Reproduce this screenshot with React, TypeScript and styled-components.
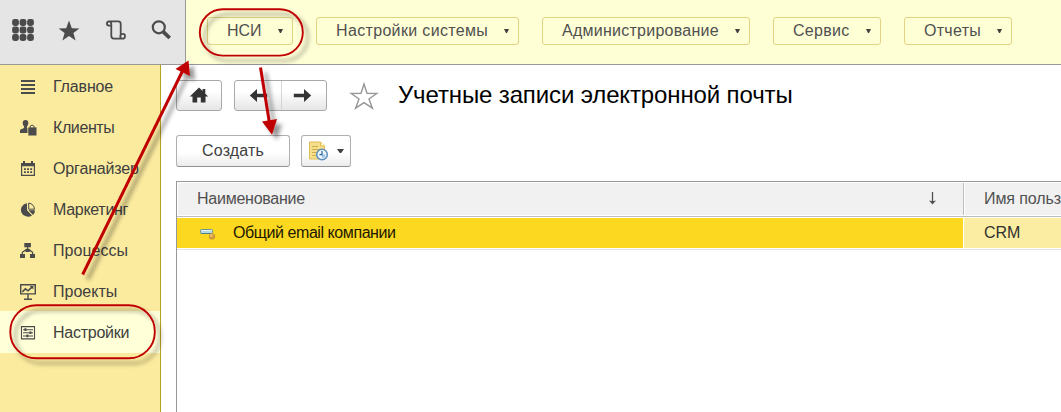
import React from "react";
import styled, { createGlobalStyle } from "styled-components";

const Global = createGlobalStyle`
  * { box-sizing: border-box; }
  html, body { margin: 0; padding: 0; }
  body {
    background: #fff;
    overflow: hidden;
    font-family: "Liberation Sans", Arial, sans-serif;
    font-size: 16px;
    color: #404040;
  }
  button { font: inherit; color: inherit; padding: 0; margin: 0; }
  svg { display: block; flex: none; }
`;

const Page = styled.div`
  position: relative;
  width: 1061px;
  height: 412px;
  overflow: hidden;
  display: flex;
  flex-direction: column;
`;

const TopBar = styled.header`
  display: flex;
  height: 65px;
  flex: none;
  border-bottom: 1px solid #989898;
  background: #ffffd6;
`;

const QuickTools = styled.div`
  width: 186px;
  flex: none;
  display: flex;
  background: #e5e5e5;
  border-right: 1px solid #989898;
`;

const Sections = styled.nav`
  display: flex;
  gap: 23px;
  padding: 17px 0 0 21px;
`;

const SectionButton = styled.button<{ $w: number }>`
  width: ${(p) => p.$w}px;
  height: 28px;
  display: flex;
  align-items: center;
  justify-content: space-between;
  padding: 0 9px 1px 19px;
  border: 1px solid #e2d382;
  border-radius: 3px;
  background: transparent;
  color: #505050;
`;

const Label = styled.span<{ $ls?: number }>`
  white-space: nowrap;
  letter-spacing: ${(p) => p.$ls ?? 0}px;
`;

const Body = styled.div`
  display: flex;
  flex: 1;
  min-height: 0;
`;

const Sidebar = styled.aside`
  width: 161px;
  flex: none;
  background: #fbeb9e;
  border-right: 1px solid #b9a21b;
`;

const SideItem = styled.div<{ $active?: boolean }>`
  height: 41px;
  display: flex;
  align-items: center;
  gap: 16px;
  padding-left: 19px;
  background: ${(p) => (p.$active ? "#ffffd8" : "transparent")};
  box-shadow: ${(p) => (p.$active ? "0 -1px #ffffd8" : "none")};
  &:first-child { margin-top: 1px; }
`;

const Content = styled.main`
  flex: 1;
  min-width: 0;
  padding: 15px 0 0 15px;
  display: flex;
  flex-direction: column;
`;

const TitleRow = styled.div`
  display: flex;
  height: 31px;
  align-items: center;
`;

const ToolButton = styled.button<{ $w: number }>`
  width: ${(p) => p.$w}px;
  height: 31px;
  display: flex;
  align-items: center;
  justify-content: center;
  border: 1px solid #a9a9a9;
  border-radius: 3px;
  background: linear-gradient(#fff 0%, #fff 35%, #e6e6e6 100%);
  color: #404040;
`;

const NavPair = styled(ToolButton).attrs({ as: "div" })`
  margin-left: 12px;
  align-items: stretch;
`;

const NavHalf = styled.span`
  flex: 1;
  display: flex;
  align-items: center;
  justify-content: center;
  & + & { border-left: 1px solid #d5d5d5; flex: 0 0 45px; padding-right: 3px; }
`;

const Title = styled.h1`
  margin: 0 0 2px 19px;
  font-size: 24px;
  font-weight: 400;
  line-height: 30px;
  letter-spacing: -0.13px;
  color: #000;
  white-space: nowrap;
`;

const StarSlot = styled.span`
  margin-left: 22px;
`;

const Commands = styled.div`
  display: flex;
  gap: 11px;
  margin-top: 24px;
`;

const CommandButton = styled(ToolButton)`
  height: 32px;
  border-color: #b0b0b0;
  border-bottom-color: #929292;
  background: linear-gradient(#fff 0%, #fff 55%, #ececec 100%);
  padding-bottom: 1px;
`;

const Table = styled.section`
  margin-top: 14px;
  flex: 1;
  border-top: 1px solid #989898;
  border-left: 1px solid #989898;
`;

const Cells = styled.div`
  display: grid;
  grid-template-columns: 786px 1fr;
`;

const HeaderCells = styled(Cells)`
  height: 35px;
  border-bottom: 1px solid #bdbdbd;
`;

const HeadCell = styled.div`
  display: flex;
  align-items: center;
  justify-content: space-between;
  margin: 1px 0 1px 1px;
  padding: 0 26px 1px 19px;
  background: #f1f1f1;
  color: #505050;
  overflow: hidden;
  & + & { margin-left: 0; border-left: 1px solid #bdbdbd; box-shadow: inset 1px 0 #fff; padding: 0 0 1px 20px; }
`;

const RowCells = styled(Cells)`
  height: 33px;
  padding: 1px 0;
  border-bottom: 1px solid #e2e2e2;
`;

const Cell = styled.div<{ $current?: boolean }>`
  display: flex;
  align-items: center;
  gap: 16px;
  padding-left: ${(p) => (p.$current ? 23 : 20)}px;
  background: ${(p) => (p.$current ? "#fcd920" : "#fbeea3")};
  color: ${(p) => (p.$current ? "#1c1800" : "#303030")};
  & + & { border-left: 1px solid #fff; }
`;

const Overlay = styled.svg`
  position: absolute;
  inset: 0;
  pointer-events: none;
`;

const DARK = "#4b4b4b";

const Caret = ({ w = 5 }: { w?: number }) => (
  <svg width={w} height="4" viewBox="0 0 5 4" preserveAspectRatio="none">
    <path d="M0 0H5L3 4H2Z" fill="#404040" />
  </svg>
);

const QuickIcons = () => (
  <svg width="185" height="64" viewBox="0 0 185 64">
    <g fill={DARK}>
      {[15.5, 23, 30.5].map((x) =>
        [22.5, 30, 37.5].map((y) => <rect key={`${x}-${y}`} x={x - 3.4} y={y - 3.4} width="6.8" height="6.8" rx="2.4" />)
      )}
      <path d="M69 20.4L71.8 28.2L79.4 28.4L73.4 33L75.6 40.6L69 36.1L62.4 40.6L64.6 33L58.6 28.4L66.2 28.2Z" />
    </g>
    <g fill="none" stroke={DARK}>
      <path d="M111.3 25.6H109Q106.9 25.6 106.9 23.6T109 21.4H118.5Q120.7 21.4 120.7 24V33.8M109 21.4Q111.3 21.5 111.3 24V35.8Q111.3 38.7 114 38.7H122.5Q125 38.7 125 36.2T122.8 33.8Q120.3 33.8 120.3 36.2T122.5 38.7" strokeWidth="1.8" />
      <circle cx="158.8" cy="27.3" r="6" strokeWidth="2.2" />
      <path d="M163.4 31.8L169.7 38" strokeWidth="3.8" />
    </g>
  </svg>
);

const SideIcon = ({ name }: { name: string }) => (
  <svg width="18" height="18" viewBox="0 0 18 18" fill={DARK}>
    {name === "list" && <path d="M2 2h14v1.9H2zM2 6h14v1.9H2zM2 10h14v1.9H2zM2 14h14v1.9H2z" />}
    {name === "clients" && (
      <>
        <path d="M6.5 1Q9.5 1 9.3 4.2Q9.2 6.5 8 7.6V9L10.3 10V14H1V11.3Q1.2 10.3 5.1 9V7.6Q3.8 6.5 3.7 4.2Q3.6 1 6.5 1Z" />
        <path d="M9.2 8.4h8.3v8.1H9.2z" />
        <path d="M11 9V8.3Q11.2 6.2 13.1 6.2T15.3 8.3V9" fill="none" stroke={DARK} />
        <path d="M8.8 7.7V16" stroke="#fbeb9e" strokeWidth=".8" />
      </>
    )}
    {name === "calendar" && (
      <>
        <path d="M2 3h14v13H2zM3.2 6.2v8.6h11.6V6.2z" fillRule="evenodd" />
        <path d="M4 1h2v3H4zM12 1h2v3h-2zM5 8.2h1.9v1.9H5zM8.1 8.2h1.9v1.9H8.1zM11.2 8.2h1.9v1.9h-1.9zM5 11.2h1.9v1.9H5zM8.1 11.2h1.9v1.9H8.1zM11.2 11.2h1.9v1.9h-1.9z" />
      </>
    )}
    {name === "pie" && (
      <>
        <path d="M8 2.3V9.2L13 14.4A7 6.7 0 1 1 8 2.3Z" />
        <path d="M9.7 2V8.2H15.5Q15 3 9.7 2Z" fill="none" stroke={DARK} />
        <path d="M9.5 9.3H16Q16 12 14 14Z" />
      </>
    )}
    {name === "process" && (
      <>
        <path d="M5.3 1h6.6v4.2H5.3zM1 12h5v4H1zM11 12h5v4h-5zM5.6 8.4L7 6.8h3.3l1.4 1.6-1.4 1.6H7z" />
        <path d="M8.6 5v3M3.3 12V10.3L6.5 8.2H10.7L13.6 10.3V12" fill="none" stroke={DARK} strokeWidth="1.2" />
      </>
    )}
    {name === "projects" && (
      <>
        <path d="M1.7 1.7h14.6v9.2H1.7zM9 11v4.8M5 16.2h8" fill="none" stroke={DARK} strokeWidth="1.4" />
        <path d="M3.3 8.8L6.4 5.9L9 7.8L13 4.2" fill="none" stroke={DARK} strokeWidth="1.6" />
        <path d="M10.8 3h3.6v3.6z" />
      </>
    )}
    {name === "settings" && (
      <>
        <path d="M2.5 2.6h13v12.3h-13z" fill="none" stroke={DARK} strokeWidth="1.1" />
        <path d="M4 5.2h10v1H4zM4 8.3h10v1H4zM4 11.5h10v1H4zM5.4 4.3h2V7h-2zM10.4 7.4h2v2.7h-2zM7.4 10.6h2v2.7h-2z" />
      </>
    )}
  </svg>
);

const HomeIcon = () => (
  <svg width="20" height="17" viewBox="0 0 20 17">
    <path d="M10 .4L13.6 4V2H16.3V6.7L19.2 9.6H16.5V15.4H11.8V10.4H8.2V15.4H3.5V9.6H.8Z" fill="#333" />
  </svg>
);

const Arrow = ({ flip }: { flip?: boolean }) => (
  <svg width="19" height="15" viewBox="0 0 19 15">
    <path d="M.8 7.5L8 1V5.7H18.2V9.3H8V14Z" fill="#333" transform={flip ? "translate(19 0) scale(-1 1)" : undefined} />
  </svg>
);

const Star = () => (
  <svg width="30" height="28" viewBox="0 0 30 28">
    <path d="M15 2L18 11.3L27.8 11.5L20 17L23.4 26.2L15 20.6L6.6 26.2L10 17L2.2 11.5L12 11.3Z" fill="#fff" stroke="#979797" strokeWidth="1.4" />
  </svg>
);

const NoteClock = () => (
  <svg width="21" height="20" viewBox="0 0 21 20">
    <path d="M1.5 1H12.5L16.5 5V18H1.5Z" fill="#f6df8b" stroke="#dfbd55" />
    <path d="M12.5 1V5H16.5" fill="#fff5c2" stroke="#dfbd55" />
    <path d="M4 5.5h6M4 8.5h9M4 11.5h5M4 14.5h4" stroke="#cfae50" />
    <circle cx="14" cy="13.5" r="5.3" fill="#eaf5fc" stroke="#5d8fbd" strokeWidth="1.5" />
    <path d="M14 9.8V13.5H17.5A3.7 3.7 0 0 1 14 17.2Z" fill="#9fc6e4" />
    <path d="M14 10V13.7H11.5" fill="none" stroke="#2d6396" strokeWidth="1.2" />
  </svg>
);

const RecordIcon = () => (
  <svg width="17" height="14" viewBox="0 0 17 14">
    <rect x=".5" y="3.5" width="12" height="4" rx="1" fill="#b7d8df" stroke="#6f9793" />
    <path d="M1.5 4.5h10" stroke="#e4f4f5" />
    <path d="M1 7.5h11" stroke="#4f7f8c" />
    <circle cx="12" cy="10.4" r="3.2" fill="#cf9a35" />
    <circle cx="11.3" cy="9.6" r="1.3" fill="#eccb75" />
  </svg>
);

const SortArrow = () => (
  <svg width="9" height="13" viewBox="0 0 9 13">
    <path d="M4.5 0V10" stroke="#505050" strokeWidth="1.3" />
    <path d="M1 8.5L4.5 9.3L8 8.5L4.5 12.5Z" fill="#505050" />
  </svg>
);

const sections = [
  { text: "НСИ", w: 86, ls: 0 },
  { text: "Настройки системы", w: 203, ls: 0.34 },
  { text: "Администрирование", w: 208, ls: 0.25 },
  { text: "Сервис", w: 108, ls: 0.3 },
  { text: "Отчеты", w: 108, ls: 0.3 },
];

const sideItems = [
  { text: "Главное", icon: "list", ls: -0.15 },
  { text: "Клиенты", icon: "clients", ls: -0.4 },
  { text: "Органайзер", icon: "calendar", ls: -0.15 },
  { text: "Маркетинг", icon: "pie", ls: -0.3 },
  { text: "Процессы", icon: "process", ls: 0.05 },
  { text: "Проекты", icon: "projects", ls: 0 },
  { text: "Настройки", icon: "settings", ls: -0.25, active: true },
];

const Annotations = () => (
  <Overlay width="1061" height="412" viewBox="0 0 1061 412">
    <defs>
      <filter id="shadow" x="-20%" y="-20%" width="150%" height="150%">
        <feDropShadow dx="5" dy="5" stdDeviation="2" floodColor="#000" floodOpacity=".42" />
      </filter>
    </defs>
    <g stroke="#c00000" fill="none" filter="url(#shadow)">
      <rect x="199.8" y="9.3" width="103" height="46.3" rx="23" strokeWidth="1.9" />
      <rect x="10.3" y="305.3" width="144.5" height="53" rx="26" strokeWidth="1.9" />
      <path d="M82.7 274.5L183 70" strokeWidth="3" />
      <path d="M260.5 67.5L269.3 122" strokeWidth="3" />
      <path d="M188.5 60.5L190 76L175.5 69Z" fill="#c00000" stroke="none" />
      <path d="M272 134.7L262 121.5L277 119Z" fill="#c00000" stroke="none" />
    </g>
  </Overlay>
);

export default function App() {
  return (
    <>
      <Global />
      <Page>
        <TopBar>
          <QuickTools><QuickIcons /></QuickTools>
          <Sections>
            {sections.map((s) => (
              <SectionButton key={s.text} $w={s.w}>
                <Label $ls={s.ls}>{s.text}</Label>
                <Caret />
              </SectionButton>
            ))}
          </Sections>
        </TopBar>
        <Body>
          <Sidebar>
            {sideItems.map((i) => (
              <SideItem key={i.text} $active={i.active}>
                <SideIcon name={i.icon} />
                <Label $ls={i.ls}>{i.text}</Label>
              </SideItem>
            ))}
          </Sidebar>
          <Content>
            <TitleRow>
              <ToolButton $w={46}><HomeIcon /></ToolButton>
              <NavPair $w={93}>
                <NavHalf><Arrow /></NavHalf>
                <NavHalf><Arrow flip /></NavHalf>
              </NavPair>
              <StarSlot><Star /></StarSlot>
              <Title>Учетные записи электронной почты</Title>
            </TitleRow>
            <Commands>
              <CommandButton $w={114}><Label $ls={0.15}>Создать</Label></CommandButton>
              <CommandButton $w={50}>
                <NoteClock />
                <svg width="8" height="1" />
                <Caret w={7} />
              </CommandButton>
            </Commands>
            <Table>
              <HeaderCells>
                <HeadCell><Label $ls={-0.25}>Наименование</Label><SortArrow /></HeadCell>
                <HeadCell><Label $ls={-0.1}>Имя пользователя</Label></HeadCell>
              </HeaderCells>
              <RowCells>
                <Cell $current><RecordIcon /><Label $ls={-0.43}>Общий email компании</Label></Cell>
                <Cell><Label>CRM</Label></Cell>
              </RowCells>
            </Table>
          </Content>
        </Body>
        <Annotations />
      </Page>
    </>
  );
}
